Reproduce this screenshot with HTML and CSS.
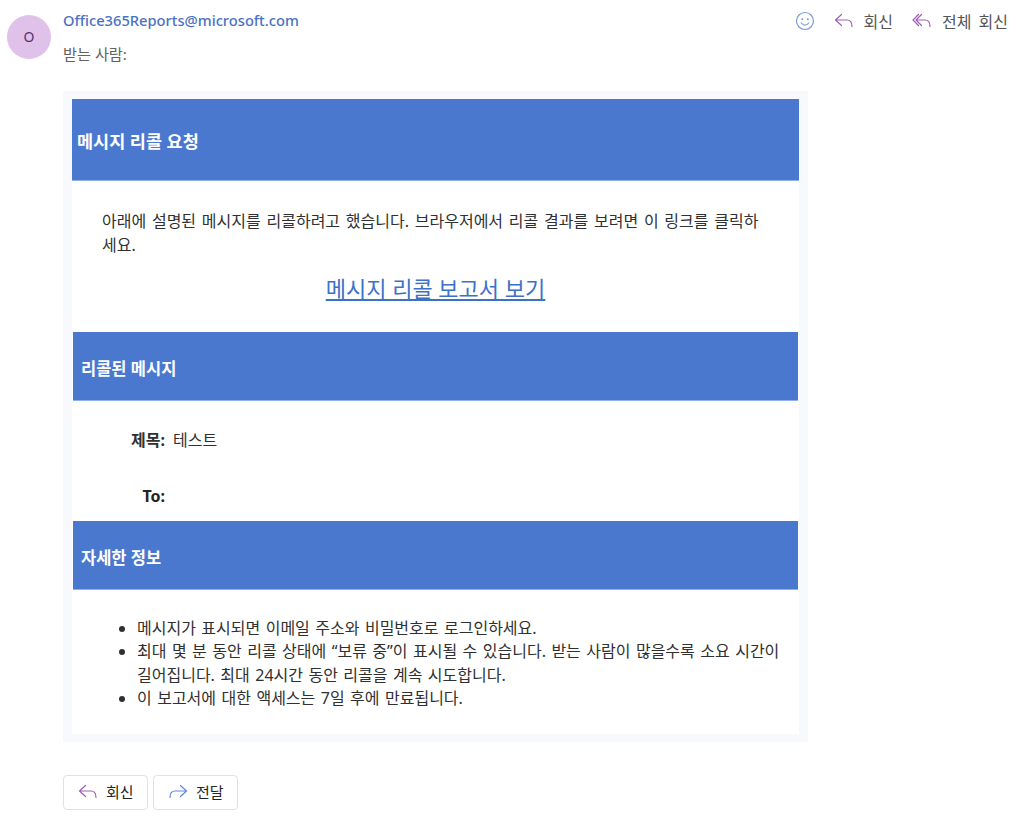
FILE: index.html
```html
<!DOCTYPE html>
<html lang="ko">
<head>
<meta charset="utf-8">
<title>메시지 리콜 요청</title>
<link rel="stylesheet" href="styles.css">
</head>
<body>
<header class="top">
  <div class="avatar">O</div>
  <div class="meta">
    <div class="sender">Office365Reports@microsoft.com</div>
    <div class="to">받는 사람:</div>
  </div>
  <div class="actions">
    <svg class="ico smile" width="20" height="20" viewBox="0 0 20 20"><circle cx="10" cy="10" r="8.500"/><circle cx="7.200" cy="8.200" r="1" class="dot"/><circle cx="12.800" cy="8.200" r="1" class="dot"/><path d="M6.300 12c1 1.500 2.300 2.200 3.700 2.200s2.700-.7 3.700-2.200"/></svg>
    <span class="act act-reply"><svg class="ico purple" width="20" height="20" viewBox="0 0 20 20"><path d="M7.500 3.500 1.500 9l6 5.500M2 9h11c3 0 5 2 5 6.500"/></svg><span>회신</span></span>
    <span class="act act-all"><svg class="ico purple" width="20" height="20" viewBox="0 0 20 20"><path d="M6.500 3.500 1 9l5.500 5.500M9.500 3.500 4 9l5.500 5.500M5 9h8c3 0 5 2 5 6.500"/></svg><span>전체 회신</span></span>
  </div>
</header>

<main class="card">
  <div class="inner">
    <h2 class="band band-first">메시지 리콜 요청</h2>
    <section class="intro">
      <p class="intro-text">아래에 설명된 메시지를 리콜하려고 했습니다. 브라우저에서 리콜 결과를 보려면 이 링크를 클릭하세요.</p>
      <p class="report"><a href="#">메시지 리콜 보고서 보기</a></p>
    </section>
    <h2 class="band">리콜된 메시지</h2>
    <dl class="fields">
      <div class="field field-subject"><dt>제목:</dt><dd>테스트</dd></div>
      <div class="field field-to"><dt>To:</dt><dd></dd></div>
    </dl>
    <h2 class="band">자세한 정보</h2>
    <ul class="notes">
      <li>메시지가 표시되면 이메일 주소와 비밀번호로 로그인하세요.</li>
      <li>최대 몇 분 동안 리콜 상태에 “보류 중”이 표시될 수 있습니다. 받는 사람이 많을수록 소요 시간이 길어집니다. 최대 24시간 동안 리콜을 계속 시도합니다.</li>
      <li>이 보고서에 대한 액세스는 7일 후에 만료됩니다.</li>
    </ul>
  </div>
</main>

<footer class="buttons">
  <button class="btn"><svg class="ico purple" width="20" height="20" viewBox="0 0 20 20"><path d="M7.500 3.500 1.500 9l6 5.500M2 9h11c3 0 5 2 5 6.500"/></svg>회신</button>
  <button class="btn"><svg class="ico blue" width="20" height="20" viewBox="0 0 20 20"><path d="M12.500 3.500l6 5.500-6 5.500M18 9H7c-3 0-5 2-5 6.500"/></svg>전달</button>
</footer>
</body>
</html>
```
FILE: styles.css
```css
* { box-sizing: border-box; }
html, body { margin: 0; padding: 0; }
body {
  width: 1024px;
  height: 819px;
  overflow: hidden;
  background: #fff;
  font-family: "Noto Sans", "Noto Sans CJK KR", sans-serif;
  font-size: 16px;
  color: #303030;
}
.top { display: flex; height: 91px; padding-left: 7px; }
.avatar {
  width: 44px; height: 44px; margin-top: 15px;
  border-radius: 50%;
  background: #e0c1ea; color: #5c2e72;
  font-size: 14px; line-height: 44px; text-align: center;
}
.meta { margin-left: 12px; padding-top: 10px; }
.sender { font-size: 14.700px; font-weight: 500; line-height: 20px; color: #4a72c4; }
.to { font-size: 15.200px; line-height: 20px; margin-top: 14px; color: #616161; }
.actions {
  margin-left: auto; padding-right: 16px; height: 42px;
  display: flex; align-items: center; font-size: 16px; color: #555;
  word-spacing: 3px;
}
.act { display: flex; align-items: center; gap: 10px; }
.act-reply { margin-left: 19px; }
.act-all { margin-left: 19px; }
.ico { fill: none; stroke-width: 1.200; stroke-linecap: round; stroke-linejoin: round; flex: none; }
.smile { stroke: #7b9ad8; }
.smile .dot { fill: #7b9ad8; stroke: none; }
.purple { stroke: #a05fb8; }
.blue { stroke: #5b8be0; }

.card {
  width: 745px; height: 651px; margin-left: 63px;
  padding: 8px 9px;
  background: #f8f9fd;
}
.inner { height: 635px; background: #fff; display: flex; flex-direction: column; }
.band {
  margin: 0 1px; height: 69px; padding: 27px 8px 0;
  background: #4a78cf; color: #fff;
  font-size: 16.500px; font-weight: 700; line-height: 20px;
  border-bottom: 1px solid #8fb0e8;
}
.band-first { margin: 0; height: 82px; padding: 32px 5px 0; font-size: 17.500px; }
.intro { height: 151px; padding: 28px 35px 0 30px; }
.intro-text { margin: 0; line-height: 24px; word-spacing: 1.600px; }
.report { margin: 16px 0 0; padding-left: 5px; text-align: center; font-size: 22px; line-height: 30px; }
.report a { color: #3b72c8; }
.fields { margin: 0; height: 120px; padding-top: 26px; }
.field { display: flex; }
.field dt { width: 93px; text-align: right; font-weight: 700; }
.field dd { margin: 0 0 0 8px; }
.field-subject { height: 56px; line-height: 26px; }
.field-to { line-height: 26px; color: #242424; }
.notes { margin: 0; padding: 27px 17px 0 65px; line-height: 23.330px; word-spacing: 1.300px; }
.buttons { display: flex; gap: 5px; margin: 33px 0 0 63px; }
.btn {
  width: 85px; height: 35px; padding: 0 0 2px 14px;
  display: flex; align-items: center; gap: 8px;
  background: #fff; border: 1px solid #e1e1e1; border-radius: 4px;
  font: inherit; font-size: 15px; color: #242424;
}
```
